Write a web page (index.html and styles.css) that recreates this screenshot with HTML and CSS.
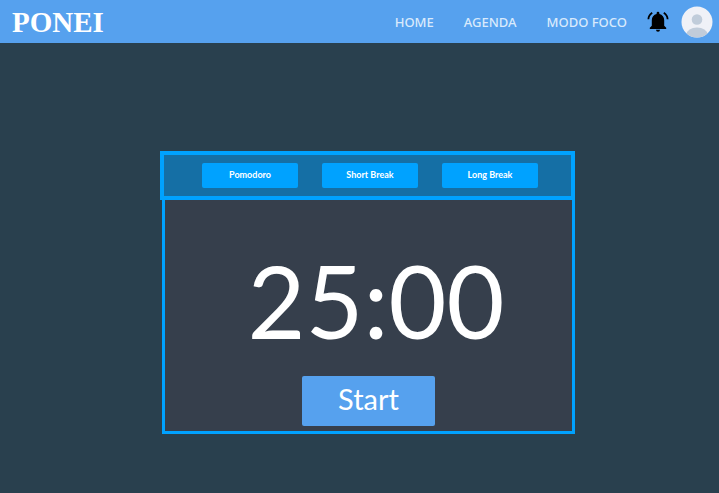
FILE: index.html
```html
<!DOCTYPE html>
<html lang="pt-BR">
<head>
<meta charset="utf-8">
<meta name="viewport" content="width=device-width, initial-scale=1">
<title>PONEI</title>
<link rel="stylesheet" href="styles.css">
</head>
<body>
<header class="topbar">
  <a class="brand" href="#">PONEI</a>
  <nav class="nav">
    <a href="#">HOME</a>
    <a href="#">AGENDA</a>
    <a href="#">MODO FOCO</a>
  </nav>
  <button class="icon-button bell" type="button" aria-label="Notificações">
    <svg viewBox="0 0 22 22" width="22" height="22" aria-hidden="true">
      <path d="M2.800 18v-1.300l2-2V9.200c0-3.300 1.800-5.600 4.800-6.300V2.200a1.400 1.400 0 0 1 2.800 0v.7c3 .7 4.800 3 4.800 6.300v5.500l2 2V18z"/>
      <path d="M9 18.700h4a2 2 0 0 1-4 0z"/>
      <path d="M5.200 1.800C3 3.300 1.500 5.500 1.400 8.300M16.800 1.800c2.200 1.500 3.700 3.700 3.800 6.500" fill="none" stroke="#000" stroke-width="1.800"/>
    </svg>
  </button>
  <button class="icon-button" type="button" aria-label="Perfil">
    <svg viewBox="0 0 32 32" width="32" height="32" aria-hidden="true">
      <defs><clipPath id="disc"><circle cx="16" cy="16" r="15.500"/></clipPath></defs>
      <circle cx="16" cy="16" r="15.500" fill="#eff1f7"/>
      <g fill="#c0ccda" clip-path="url(#disc)">
        <circle cx="16" cy="13.500" r="5.300"/>
        <ellipse cx="16" cy="28.500" rx="10.500" ry="7"/>
      </g>
    </svg>
  </button>
</header>
<main class="focus">
  <section class="timer">
    <div class="modes">
      <button type="button">Pomodoro</button>
      <button type="button">Short Break</button>
      <button type="button">Long Break</button>
    </div>
    <div class="clock">
      <div class="time" role="timer">25:00</div>
      <button class="start" type="button">Start</button>
    </div>
  </section>
</main>
</body>
</html>
```
FILE: styles.css
```css
* { box-sizing: border-box; }

body {
  margin: 0;
  min-height: 100vh;
  display: flex;
  flex-direction: column;
  background: #29404e;
  font-family: Lato, sans-serif;
  color: #fff;
}

button {
  border: 0;
  padding: 0;
  font-family: inherit;
  color: inherit;
  cursor: pointer;
}

a { color: inherit; text-decoration: none; }

.topbar {
  display: flex;
  align-items: center;
  height: 43px;
  padding: 0 6px 0 12px;
  background: #56a1ee;
}

.brand {
  margin-right: auto;
  font: bold 29px/40px "Liberation Serif", serif;
}

.nav {
  display: flex;
  gap: 30px;
  margin-right: 20px;
  font: 500 13px/20px "Noto Sans", sans-serif;
  color: #d9eafc;
}

.icon-button {
  display: flex;
  background: none;
}

.bell { margin-right: 12px; }

.focus {
  flex: 1;
  display: flex;
  justify-content: center;
  align-items: flex-start;
  padding: 108px 0 24px 16px;
}

.timer {
  width: 100%;
  max-width: 415px;
}

.modes {
  display: flex;
  justify-content: center;
  gap: 24px;
  padding: 8px 0 8px 5px;
  border: 4px solid #00a2ff;
  background: #156fa5;
}

.modes button {
  width: 96px;
  height: 25px;
  padding-bottom: 2px;
  border-radius: 2px;
  background: #00a2ff;
  font-size: 9px;
  font-weight: 700;
  line-height: 12px;
}

.clock {
  display: flex;
  flex-direction: column;
  align-items: center;
  margin-left: 2px;
  padding: 40px 0 5px;
  border: 3px solid #00a2ff;
  border-top: 0;
  background: #363f4c;
}

.time {
  padding-left: 15px;
  font-size: 100px;
  line-height: 120px;
}

.start {
  width: 133px;
  height: 50px;
  margin-top: 16px;
  padding-bottom: 4px;
  border-radius: 2px;
  background: #56a1ee;
  font-size: 29px;
  line-height: 36px;
}
```
